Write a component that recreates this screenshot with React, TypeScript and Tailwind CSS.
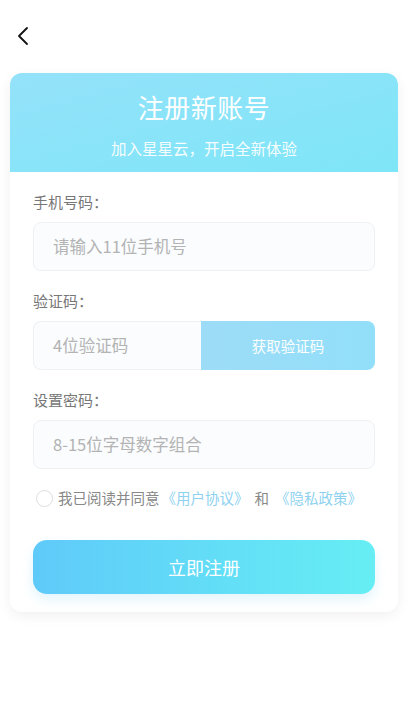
import React from "react";

const font = { fontFamily: '"Noto Sans CJK SC", "Noto Sans", sans-serif' };

function Field({ label, placeholder }: { label: string; placeholder: string }) {
  return (
    <div className="flex flex-col">
      <p className="text-[15px] leading-[20px] text-[#777]">{label}</p>
      <div className="mt-[10px] h-[49px] rounded-[8px] border border-[#eef0f3] bg-[#fafcfe] flex items-center px-[19px]">
        <span className="text-[16.5px] text-[#b3b3b3]">{placeholder}</span>
      </div>
    </div>
  );
}

export default function App() {
  return (
    <div className="relative w-[408px] h-[727px] bg-white overflow-hidden" style={font}>
      {/* back */}
      <div className="h-[73px] pl-[16px] pt-[26px]">
        <svg width="14" height="20" viewBox="0 0 14 20" fill="none">
          <path d="M11 2 L3 10 L11 18" stroke="#111" strokeWidth="1.8" strokeLinecap="round" strokeLinejoin="round" />
        </svg>
      </div>

      <div className="mx-[10px] rounded-[12px] bg-white shadow-[0_4px_14px_rgba(0,0,0,0.06)] overflow-hidden">
        <div className="h-[99px] bg-gradient-to-br from-[#94e2fa] to-[#7ee6f7] flex flex-col items-center">
          <h1 className="mt-[17px] text-[26px] leading-[34px] text-white tracking-[0.5px]">注册新账号</h1>
          <p className="mt-[13px] text-[15.5px] leading-[22px] text-white/95">加入星星云，开启全新体验</p>
        </div>

        <div className="px-[23px] pt-[20px] pb-[18px] flex flex-col">
          <Field label="手机号码：" placeholder="请输入11位手机号" />

          <div className="mt-[20px] flex flex-col">
            <p className="text-[15px] leading-[20px] text-[#777]">验证码：</p>
            <div className="mt-[10px] h-[49px] flex">
              <div className="w-[168px] rounded-l-[8px] border border-r-0 border-[#eef0f3] bg-[#fafcfe] flex items-center px-[19px]">
                <span className="text-[16.5px] text-[#b3b3b3]">4位验证码</span>
              </div>
              <div className="flex-1 rounded-r-[8px] bg-gradient-to-r from-[#9ddcf6] to-[#92dffa] flex items-center justify-center">
                <span className="text-[14.5px] text-white">获取验证码</span>
              </div>
            </div>
          </div>

          <div className="mt-[20px]">
            <Field label="设置密码：" placeholder="8-15位字母数字组合" />
          </div>

          <div className="mt-[19px] pl-[3px] flex items-center text-[14.5px] leading-[20px]">
            <span className="w-[17px] h-[17px] rounded-full border border-[#ddd] mr-[5px]" />
            <span className="text-[#888]">我已阅读并同意</span>
            <span className="ml-[2px] text-[#8fd2ef]">《用户协议》</span>
            <span className="mx-[6px] text-[#888]">和</span>
            <span className="text-[#8fd2ef]">《隐私政策》</span>
          </div>

          <button className="mt-[32px] h-[54px] rounded-[14px] bg-gradient-to-r from-[#5fcaf9] to-[#66eef4] shadow-[0_6px_12px_rgba(100,200,240,0.18)] text-white text-[18px]">
            立即注册
          </button>
        </div>
      </div>
    </div>
  );
}
